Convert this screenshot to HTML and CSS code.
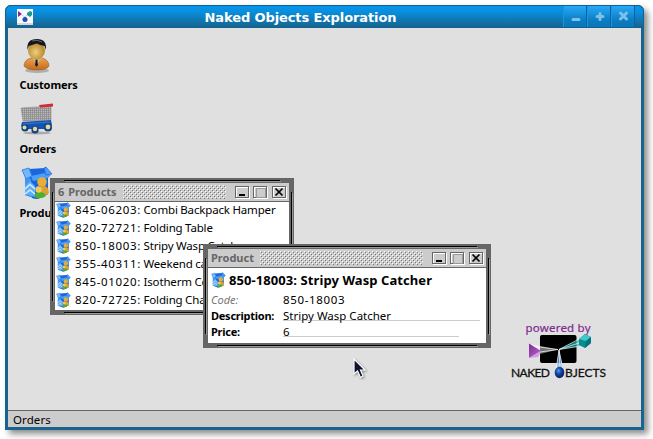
FILE: index.html
```
<!DOCTYPE html>
<html lang="en">
<head>
<meta charset="utf-8">
<title>Naked Objects Exploration</title>
<link rel="stylesheet" href="styles.css">
</head>
<body>
<svg class="defs" aria-hidden="true">
  <defs>
    <linearGradient id="box-side" x1="0" y1="0" x2="1" y2="1"><stop offset="0" stop-color="#5fb2fb"/><stop offset=".5" stop-color="#2485ee"/><stop offset="1" stop-color="#0756c8"/></linearGradient>
    <radialGradient id="skin" cx=".45" cy=".6"><stop offset="0" stop-color="#f0d080"/><stop offset="1" stop-color="#b98a30"/></radialGradient>
    <linearGradient id="coat" x1="0" y1="0" x2="0" y2="1"><stop offset="0" stop-color="#eda14e"/><stop offset="1" stop-color="#c26a1b"/></linearGradient>
    <pattern id="mesh" width="2" height="2" patternUnits="userSpaceOnUse"><path d="M0 0H2V2H0Z" fill="#b9b9b9"/><path d="M0 .5H2M.5 0V2" stroke="#858585" stroke-width=".6"/></pattern>
    <linearGradient id="violet" x1="0" y1="0" x2="1" y2="1"><stop offset="0" stop-color="#7b2a96"/><stop offset="1" stop-color="#bd6bd0"/></linearGradient>
    <radialGradient id="ball" cx=".4" cy=".35"><stop offset="0" stop-color="#5d9cf0"/><stop offset=".5" stop-color="#1a4fb0"/><stop offset="1" stop-color="#0a2c78"/></radialGradient>
  </defs>
  <symbol id="product" viewBox="0 0 32 34">
    <path d="M4 9 25 7 27 28 17 33 4 29Z" fill="url(#box-side)"/>
    <path d="M8 3 24 2 25 10 9 13Z" fill="#1a66de"/>
    <path d="M4 9 10 13 15 11 15 33 4 29Z" fill="#3d97f3"/>
    <path d="M10 12 27 8 27 28 15 33 11 32Z" fill="#1766d8"/>
    <path d="M1 4 8 2 11 10 5 13Z" fill="#74b6fa" stroke="#2576e4" stroke-width=".8"/>
    <path d="M10 10 24 7 30 9 27 12 12 15Z" fill="#4c9ff6"/>
    <path d="M23 2 25 1 31 8 25 9Z" fill="#4e9df5" stroke="#1c62d4" stroke-width=".7"/>
    <path d="M4 20 9 15 14 20V31L4 28Z" fill="#60aef8"/>
    <path d="M4 23 9 18.500 14 23M4 28 9 24 14 28" fill="none" stroke="#d4ebff" stroke-width="1.500"/>
    <circle cx="21" cy="16" r="4.800" fill="#e6ae37"/>
    <path d="M16 25q2-5 7-5 5 1 5 7l-6 4Z" fill="#e0a02e"/>
    <path d="M13 31q1-5 5-5 6 0 7 4-5 4-12 1Z" fill="#4caf31"/>
    <circle cx="17.500" cy="23.500" r="3.200" fill="#f0c860"/>
  </symbol>
</svg>

<main class="app">
  <header class="titlebar">
    <svg class="app-logo" viewBox="0 0 16 16"><path d="M0 0H16V16H0Z" fill="#f8f8fc"/><path d="M0 14H16V16H0Z" fill="#d5d5d8"/><path d="M1 2 5 5 1 8Z" fill="#812b91"/><path d="M5 6 8 8 10 6" fill="none" stroke="#ccd" /><path d="M10 4 13 2 15 3V6L13 8 10 6Z" fill="#149b8e"/><circle cx="8" cy="10.500" r="2.500" fill="#1d4fa8"/></svg>
    <h1>Naked Objects Exploration</h1>
    <div class="controls">
      <span><svg viewBox="0 0 22 21"><path d="M9 13.500H15" stroke-width="3"/></svg></span>
      <span><svg viewBox="0 0 22 21"><path d="M9 10.500H15M12 7.500V13.500" stroke-width="3"/></svg></span>
      <span><svg viewBox="0 0 22 21"><path d="M8.500 7 14.500 13M14.500 7 8.500 13" stroke-width="3"/></svg></span>
    </div>
  </header>

  <section class="desktop">
    <div class="shortcuts">
      <div class="shortcut">
        <svg viewBox="0 0 32 36"><ellipse cx="14" cy="32.500" rx="12" ry="2.500" fill="#999" opacity=".7"/><path d="M1 28Q1 22 8 20H19Q26 22 26 28 24 32 14 32T1 28Z" fill="url(#coat)" stroke="#9e5a1c" stroke-width=".6"/><path d="M9 20 13.500 27 19 20Z" fill="#d8b27a"/><path d="M12.500 21.500H14.500L14.500 24 15 27 13.500 29 12 27 12.500 24Z" fill="#171b25"/><ellipse cx="13.500" cy="12.500" rx="8.500" ry="9" fill="url(#skin)"/><path d="M4.500 12Q3 1 14 1 24 1 23 12L21.500 8Q17 7 14 5.500 8 7 5.800 8Z" fill="#14171d"/><path d="M9 3Q14 1 19 4" stroke="#667" fill="none"/></svg>
        <b>Customers</b>
      </div>
      <div class="shortcut">
        <svg viewBox="0 0 34 36"><ellipse cx="17" cy="31" rx="14" ry="1.500" fill="#aaa"/><path d="M1 6 31 4 31 18 3 19Z" fill="url(#mesh)" stroke="#888" stroke-width=".5"/><path d="M2 20 31 18 32 23 29 27H4L1 24Z" fill="#1454b0"/><path d="M3 22 30 20" stroke="#3977d0"/><g fill="#163f82"><circle cx="5" cy="26" r="3.600"/><circle cx="15" cy="28" r="3.600"/><circle cx="28" cy="25.500" r="4"/></g><g fill="#e2dc92"><circle cx="4.500" cy="25.500" r="2"/><circle cx="15" cy="27" r="2.200"/><circle cx="28" cy="25" r="2.400"/></g><path d="M19 3 33 1.500V4.500L20 5.500Z" fill="#d52b35"/></svg>
        <b>Orders</b>
      </div>
      <div class="shortcut">
        <svg viewBox="0 0 32 36"><use href="#product" width="32" height="34" x="0" y="0"/></svg>
        <b>Products</b>
      </div>
    </div>

    <div class="powered">
      <svg viewBox="0 0 100 62">
        <text x="15.500" y="10.500" class="by" textLength="65">powered by</text>
        <rect x="30" y="14" width="36.500" height="28" rx="2"/>
        <path d="M20 23 48 28.500 26 34Z" fill="#fff" opacity=".45"/><path d="M22 25 48 28.500 30 31" fill="none" stroke="#fff" stroke-width=".7"/>
        <path d="M49 28.500 70 18 72 25Z" fill="#2ab3b3" opacity=".65"/><path d="M71 17 49 28.500 72 21M49 28.500 71 25" fill="none" stroke="#dff" stroke-width=".7"/>
        <path d="M49 29 45.500 50H54Z" fill="#7fb4ee" opacity=".7"/><path d="M46 49 49 29 50 48M49 29 53 49" fill="none" stroke="#fff" stroke-width=".7"/>
        <path d="M19 22.500 31 30 19 37Z" fill="url(#violet)"/><path d="M19 37 31 30 28 36Z" fill="#d59be0"/>
        <path d="M69 18 75 13 81 16 81 22 75 27 69 24Z" fill="#088b91"/><path d="M69 18 75 13 81 16 76 20Z" fill="#3fcaca"/><path d="M76 20 81 16V22L75 27Z" fill="#06737b"/>
        <text x="1" y="55.500" class="brand" textLength="39">NAKED</text>
        <text x="55" y="55.500" class="brand" textLength="41">BJECTS</text>
        <ellipse cx="49.500" cy="51.500" rx="4.800" ry="5.800" fill="url(#ball)"/>
      </svg>
    </div>

    <article class="window list-window">
      <i class="groove top"></i><i class="groove bottom"></i><i class="groove left"></i><i class="groove right"></i>
      <header class="bar"><b>6 Products</b><span class="grip"></span><span class="btn min"></span><span class="btn max"></span><span class="btn close"><svg viewBox="0 0 12 10"><path d="M2.500 1.500 9.500 8.500M9.500 1.500 2.500 8.500"/></svg></span></header>
      <ul class="rows">
        <li><svg><use href="#product"/></svg><span><span class="num">845-06203:</span> Combi Backpack Hamper</span></li>
        <li><svg><use href="#product"/></svg><span><span class="num">820-72721:</span> Folding Table</span></li>
        <li><svg><use href="#product"/></svg><span><span class="num">850-18003:</span> Stripy Wasp Catcher</span></li>
        <li><svg><use href="#product"/></svg><span><span class="num">355-40311:</span> Weekend camper</span></li>
        <li><svg><use href="#product"/></svg><span><span class="num">845-01020:</span> Isotherm Cooler</span></li>
        <li><svg><use href="#product"/></svg><span><span class="num">820-72725:</span> Folding Chair</span></li>
      </ul>
    </article>

    <article class="window detail-window">
      <i class="groove top"></i><i class="groove bottom"></i><i class="groove left"></i><i class="groove right"></i>
      <header class="bar"><b>Product</b><span class="grip"></span><span class="btn min"></span><span class="btn max"></span><span class="btn close"><svg viewBox="0 0 12 10"><path d="M2.500 1.500 9.500 8.500M9.500 1.500 2.500 8.500"/></svg></span></header>
      <div class="detail">
        <h2><svg><use href="#product"/></svg><span>850-18003: Stripy Wasp Catcher</span></h2>
        <dl>
          <dt class="code">Code:</dt><dd class="num">850-18003</dd>
          <dt>Description:</dt><dd class="line">Stripy Wasp Catcher</dd>
          <dt>Price:</dt><dd class="line short">6</dd>
        </dl>
      </div>
    </article>

    <svg class="cursor" viewBox="0 0 14 22"><path d="M1 1V16L4.500 13 7.500 19.500 10 18 7.500 12H12Z" fill="#10132f" stroke="#fff" stroke-width="1.200"/></svg>
  </section>
  <footer class="status">Orders</footer>
</main>
</body>
</html>
```
FILE: styles.css
```
* { box-sizing: border-box; }
body { margin: 0; padding: 5px; width: 653px; height: 439px; overflow: hidden; background: #fff; font-family: "Noto Sans", sans-serif; font-size: 11px; color: #000; }
svg { display: block; }
.defs { position: absolute; width: 0; height: 0; }
h1, h2, ul, dl, dd { margin: 0; padding: 0; }

.app { width: 639px; height: 425px; display: flex; flex-direction: column; border: 3px solid #17648f; border-top: 0; border-radius: 6px 6px 0 0; background: #17648f; box-shadow: 4px 4px 6px rgba(0,0,0,.45); }
.titlebar { height: 23px; flex: none; margin: 0 -3px; padding: 0 8px 0 12px; display: flex; align-items: flex-start; border: 1px solid #12618f; border-radius: 6px 6px 0 0; background: linear-gradient(#0795ea, #0890e0 25%, #15648f); }
.app-logo { width: 16px; height: 16px; margin: 3px 0 0 -1px; }
.titlebar h1 { flex: 1; padding-left: 5px; text-align: center; font: bold 13px/23px "DejaVu Sans", sans-serif; letter-spacing: -.1px; color: #fff; white-space: nowrap; }
.controls { display: flex; height: 21px; }
.controls span { width: 24px; border-right: 1px solid #0b629c; border-left: 1px solid #1596e6; background: linear-gradient(#27a9fa, #0a7cc0 70%, #0877b8); }
.controls svg { width: 22px; height: 21px; fill: none; stroke: #7fc0e9; stroke-linecap: round; }

.desktop { position: relative; height: 382px; background: #e0e0e0; overflow: hidden; }
.shortcuts { padding: 10px 0 0 11px; }
.shortcut { height: 64px; display: flex; flex-direction: column; align-items: flex-start; }
.shortcut svg { width: 32px; height: 36px; margin-left: 4px; }
.shortcut:nth-child(2) svg { width: 34px; margin-left: 1px; }
.shortcut:nth-child(3) svg { margin-left: 2px; }
.shortcut b { line-height: 15px; margin: 3px 0 0 .5px; letter-spacing: -.1px; }

.window { position: absolute; padding: 5px; background: #666; display: flex; flex-direction: column; }
.list-window { left: 42px; top: 150px; width: 244px; height: 137px; }
.detail-window { left: 195px; top: 216px; width: 288px; height: 104px; }
.groove { position: absolute; background: #000; }
.groove.top, .groove.bottom { left: 14px; right: 14px; height: 1px; box-shadow: 1px 1px #999; }
.groove.left, .groove.right { top: 14px; bottom: 14px; width: 1px; box-shadow: 1px 1px #999; }
.groove.top { top: 2px; }
.groove.bottom { bottom: 2px; }
.groove.left { left: 2px; }
.groove.right { right: 2px; }
.bar { height: 19px; flex: none; display: flex; align-items: center; padding: 0 4px 0 3px; background: #ccc; border-bottom: 1px solid #666; color: #666; }
.bar b { line-height: 18px; white-space: nowrap; }
.list-window .bar b { word-spacing: 1px; }
.grip { flex: 1; height: 14px; margin: 0 9px 0 6px; background-image: radial-gradient(circle at .5px .5px, #fff .7px, transparent .8px), radial-gradient(circle at 1.5px 1.5px, #777 .7px, transparent .8px), radial-gradient(circle at 2.5px 2.5px, #fff .7px, transparent .8px), radial-gradient(circle at 3.500px 3.500px, #777 .7px, transparent .8px); background-size: 4px 4px; }
.btn { width: 14px; height: 12px; margin-left: 4px; flex: none; border: 1px solid #666; box-shadow: 1px 1px #fff, inset 1px 1px #fff; position: relative; }
.bar { padding-right: 4px; }
.grip + .btn { margin-left: 0; }
.btn.close { margin-left: 5px; margin-right: -1px; }
.min::after { content: ""; position: absolute; left: 3px; bottom: 1px; width: 6px; height: 2px; background: #000; }
.max::after { content: ""; position: absolute; left: 2px; top: 1px; width: 8px; height: 8px; border: 1px solid #999; }
.close svg { width: 12px; height: 10px; fill: none; stroke: #000; stroke-width: 1.7; }

.rows { flex: 1; background: #fff; list-style: none; overflow: hidden; }
.rows li { height: 18px; display: flex; align-items: flex-start; font-size: 11.5px; line-height: 16px; white-space: nowrap; }
.rows svg, h2 svg { width: 15px; height: 16px; flex: none; margin-left: 1px; }
.rows li > span { margin-left: 4px; letter-spacing: -.15px; word-spacing: -.3px; }
.rows .num, dd.num { letter-spacing: .65px; }

.detail { flex: 1; background: #fff; }
h2 { display: flex; align-items: center; height: 24px; padding-left: 2px; font-size: 13px; letter-spacing: .08px; }
h2 span { margin-left: 3px; white-space: nowrap; }
dl { display: grid; grid-template-columns: 72px 1fr; grid-auto-rows: 16px; padding: 0 6px 0 3px; }
dt { font-weight: bold; line-height: 16px; letter-spacing: -.25px; }
dt.code { font-weight: normal; font-style: italic; letter-spacing: 0; color: #777; }
dd { font-size: 11.5px; line-height: 16px; height: 14px; border-bottom: 1px solid transparent; }
dd.line { height: 13px; border-bottom-color: #ccc; }
dd.short { width: 176px; }

.cursor { position: absolute; left: 345px; top: 330px; width: 14px; height: 22px; filter: drop-shadow(1px 1px 1px rgba(0,0,0,.4)); }
.powered { position: absolute; left: 502px; top: 293px; }
.powered svg { width: 100px; height: 62px; overflow: visible; }
.by { font: 11.500px "Noto Sans", sans-serif; fill: #812b91; stroke: #812b91; stroke-width: .2; }
.brand { font: 12px Lato, sans-serif; fill: #111; stroke: #111; stroke-width: .3; }
.status { height: 17px; padding-left: 5px; border-top: 1px solid #666; background: #ccc; font-size: 11.5px; line-height: 17px; letter-spacing: .1px; }
```
